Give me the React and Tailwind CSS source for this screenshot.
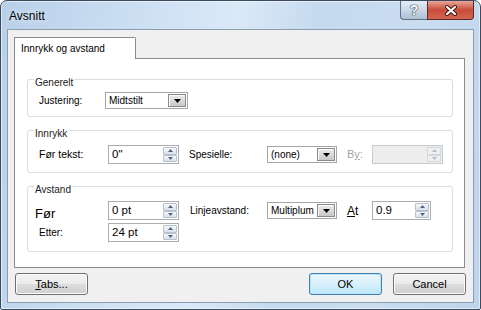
import React from "react";

const SANS = "font-['Liberation_Sans',Arial,sans-serif]";

function SpinBtn({ up, disabled }) {
  return (
    <div
      className={`flex-1 flex items-center justify-center border rounded-[1px] ${
        disabled
          ? "border-[#d3d8de] bg-[#eef0f2]"
          : "border-[#b7c2cf] bg-gradient-to-b from-[#f6f8fa] to-[#d8e0e9]"
      }`}
    >
      <svg width="5" height="3" viewBox="0 0 5 3">
        {up ? (
          <path d="M0 3L2.5 0L5 3Z" fill={disabled ? "#b5bcc6" : "#4f6287"} />
        ) : (
          <path d="M0 0L5 0L2.5 3Z" fill={disabled ? "#b5bcc6" : "#4f6287"} />
        )}
      </svg>
    </div>
  );
}

function SpinInput({ value, w, disabled }) {
  return (
    <div
      className={`flex h-[19px] ${w} border ${
        disabled ? "border-[#c9cbce] bg-[#ededed]" : "border-[#abadb3] bg-white"
      }`}
    >
      <div className="flex-1 pl-[3px] text-[11.5px] leading-[17px] text-black">{value}</div>
      <div className="flex flex-col w-[15px] py-[1px] pr-[1px]">
        <SpinBtn up disabled={disabled} />
        <SpinBtn disabled={disabled} />
      </div>
    </div>
  );
}

function Dropdown({ value, w }) {
  return (
    <div className={`flex h-[17px] ${w} border border-[#a5a5a5] bg-white p-[1px]`}>
      <div className="flex-1 pl-[2px] text-[10px] leading-[13px] text-black">{value}</div>
      <div className="w-[18px] flex items-center justify-center border border-[#8a8a8a] bg-gradient-to-b from-[#ececec] to-[#c9c9c9] shadow-[inset_1px_1px_0_#fafafa]">
        <svg width="7" height="4" viewBox="0 0 7 4">
          <path d="M0 0H7L3.5 4Z" fill="#000" />
        </svg>
      </div>
    </div>
  );
}

function Group({ label, h, mt, children }) {
  return (
    <div className={`${h} ${mt} ml-[12px] mr-[11px] border border-[#d5dfe5] rounded-[3px] flex flex-col`}>
      <div className="-mt-[3px] ml-[6px] w-fit px-[1px] bg-white text-[10px] leading-[12px] text-[#1a1a1a]">
        {label}
      </div>
      {children}
    </div>
  );
}

function WinButton({ children, primary, className = "" }) {
  return (
    <div
      className={`w-[73px] h-[22px] rounded-[3px] border flex items-center justify-center text-[11px] text-black ${
        primary
          ? "border-[#3c7fb1] bg-gradient-to-b from-[#eaf6fd] via-[#d9f0fc] to-[#bee6fd] shadow-[inset_0_0_0_1px_#bfe3f8]"
          : "border-[#707070] bg-[linear-gradient(#f2f2f2,#ebebeb_50%,#dddddd_51%,#cfcfcf)] shadow-[inset_0_0_0_1px_#fcfcfc]"
      } ${className}`}
    >
      {children}
    </div>
  );
}

export default function App() {
  return (
    <div
      className={`${SANS} w-[481px] h-[310px] border border-[#3b4a5c] rounded-t-[7px] rounded-b-[2px] flex flex-col overflow-hidden bg-[linear-gradient(100deg,#b8d0e9_0%,#cfe1f4_30%,#dbe9f7_45%,#c6daef_60%,#c9dcf0_80%,#bed4ec_100%)] shadow-[inset_0_0_0_1px_rgba(255,255,255,0.55)]`}
    >
      {/* Title bar */}
      <div className="h-[28px] flex items-start justify-between shrink-0">
        <div className="pl-[8px] pt-[8px] text-[12px] leading-[14px] text-black [text-shadow:0_0_6px_#ffffff]">
          Avsnitt
        </div>
        <div className="flex mr-[6px]">
          <div className="w-[27px] h-[19px] border border-t-0 border-r-0 border-[#5d6f84] rounded-bl-[4px] bg-gradient-to-b from-[#e4ecf5] via-[#cbd8e6] to-[#aebfd3] flex items-center justify-center text-[14px] font-bold leading-none text-white [text-shadow:0_0_1px_#1f2c3d,0_0_1px_#1f2c3d,0_0_1px_#1f2c3d]">
            ?
          </div>
          <div className="w-[47px] h-[19px] border border-t-0 border-[#5a2b26] rounded-br-[4px] bg-gradient-to-b from-[#e7a699] via-[#c84b39] to-[#d5654f] flex items-center justify-center">
            <svg width="14" height="11" viewBox="0 0 14 11">
              <path d="M3 2L11 9M11 2L3 9" stroke="#3a1410" strokeWidth="4" strokeLinecap="round" />
              <path d="M3 2L11 9M11 2L3 9" stroke="#ffffff" strokeWidth="2.2" strokeLinecap="round" />
            </svg>
          </div>
        </div>
      </div>

      {/* Client area */}
      <div className="mx-[6px] mb-[6px] flex-1 border border-[#8d9db0] bg-[#f0f0f0] flex flex-col pt-[7px] pl-[6px] pr-[8px]">
        {/* Tab header */}
        <div className="flex h-[22px] -mb-px relative z-10">
          <div className="w-[122px] h-[22px] border border-b-0 border-[#898c95] rounded-tr-[2px] bg-white pl-[6px] text-[10px] leading-[21px] text-black">
            Innrykk og avstand
          </div>
        </div>

        {/* Panel */}
        <div className="h-[210px] border border-[#898c95] bg-white flex flex-col">
          <Group label="Generelt" h="h-[38px]" mt="mt-[20px]">
            <div className="flex items-center h-[17px] mt-[3px]">
              <div className="w-[77px] pl-[11px] text-[10px] text-black">Justering:</div>
              <Dropdown value="Midtstilt" w="w-[83px]" />
            </div>
          </Group>

          <Group label="Innrykk" h="h-[43px]" mt="mt-[13px]">
            <div className="flex items-center h-[19px] mt-[5px]">
              <div className="w-[80px] pl-[11px] text-[10.5px] text-black">Før tekst:</div>
              <SpinInput value={'0"'} w="w-[71px]" />
              <div className="ml-[10px] w-[78px] text-[10px] text-black">Spesielle:</div>
              <Dropdown value="(none)" w="w-[70px]" />
              <div className="ml-[10px] w-[25px] text-[11px] text-[#a3a3a3]">
                B<span className="underline">y</span>:
              </div>
              <SpinInput value="" w="w-[71px]" disabled />
            </div>
          </Group>

          <Group label="Avstand" h="h-[66px]" mt="mt-[13px]">
            <div className="flex items-center h-[19px] mt-[5px]">
              <div className="w-[80px] pl-[7px] pt-[6px] text-[13px] text-black">Før</div>
              <SpinInput value="0 pt" w="w-[71px]" />
              <div className="ml-[11px] w-[77px] text-[10px] text-black">Linjeavstand:</div>
              <Dropdown value="Multiplum" w="w-[70px]" />
              <div className="ml-[10px] w-[25px] text-[12px] text-black">
                <span className="underline">A</span>t
              </div>
              <SpinInput value="0.9" w="w-[59px]" />
            </div>
            <div className="flex items-center h-[19px] mt-[3px]">
              <div className="w-[80px] pl-[11px] text-[10px] text-black">Etter:</div>
              <SpinInput value="24 pt" w="w-[71px]" />
            </div>
          </Group>
        </div>

        {/* Buttons */}
        <div className="flex mt-[5px] h-[22px] ml-[1px] -mr-[1px]">
          <WinButton>
            <span>
              <span className="underline">T</span>abs...
            </span>
          </WinButton>
          <div className="flex-1" />
          <WinButton primary>OK</WinButton>
          <WinButton className="ml-[11px]">Cancel</WinButton>
        </div>
      </div>
    </div>
  );
}
